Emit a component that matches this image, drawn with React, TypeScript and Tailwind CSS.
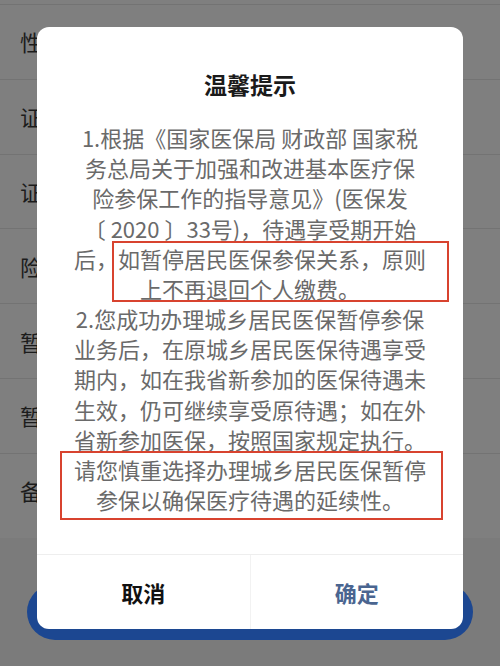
import React from 'react'

const labels = ['性', '证', '证', '险', '暂', '暂', '备']

const lines = [
  '1.根据《国家医保局 财政部 国家税',
  '务总局关于加强和改进基本医疗保',
  '险参保工作的指导意见》(医保发',
  '〔 2020 〕33号)，待遇享受期开始',
  '后，如暂停居民医保参保关系，原则',
  '上不再退回个人缴费。',
  '2.您成功办理城乡居民医保暂停参保',
  '业务后，在原城乡居民医保待遇享受',
  '期内，如在我省新参加的医保待遇未',
  '生效，仍可继续享受原待遇；如在外',
  '省新参加医保，按照国家规定执行。',
  '请您慎重选择办理城乡居民医保暂停',
  '参保以确保医疗待遇的延续性。',
]

export default function App() {
  return (
    <div
      className="relative w-[500px] h-[666px] overflow-hidden bg-[#7b7b7b]"
      style={{ fontFamily: '"Noto Sans CJK SC", "Noto Sans", sans-serif' }}
    >
      {/* 背后的页面（已被遮罩压暗） */}
      <div className="bg-[#7f7f7f] pt-[4px] pb-[10px]">
        {labels.map((l, i) => (
          <div
            key={i}
            className="h-[74.8px] border-t border-[#737373] flex items-center pl-[20px] text-[22px] text-[#1c1c1c]"
          >
            {l}
          </div>
        ))}
      </div>
      <div className="mx-[27px] mt-[46px] h-[56px] rounded-full bg-[#1c4791]" />

      {/* 弹窗 */}
      <div className="absolute left-[37px] top-[27px] w-[426px] h-[602px] rounded-[12px] bg-white flex flex-col overflow-hidden">
        <div className="relative flex-1 pt-[42px]">
          <h2 className="text-center text-[23px] leading-[30px] font-bold text-[#1a1a1a]">温馨提示</h2>
          <div className="mt-[23px] text-center text-[22px] leading-[30.17px] text-[#6a6a6a] whitespace-pre">
            {lines.map((t, i) => (
              <div key={i}>{t}</div>
            ))}
          </div>

          {/* 红框标注 */}
          <div className="absolute left-[75px] top-[214px] w-[337px] h-[61px] border-2 border-[#d8432f]" />
          <div className="absolute left-[23px] top-[424px] w-[383px] h-[69px] border-2 border-[#d8432f]" />
        </div>

        <div className="h-[75px] border-t border-[#eeeeee] flex">
          <button className="flex-1 text-[22px] font-bold text-[#111111] border-r border-[#f2f2f2]">取消</button>
          <button className="flex-1 text-[22px] font-bold text-[#4a6590]">确定</button>
        </div>
      </div>
    </div>
  )
}
